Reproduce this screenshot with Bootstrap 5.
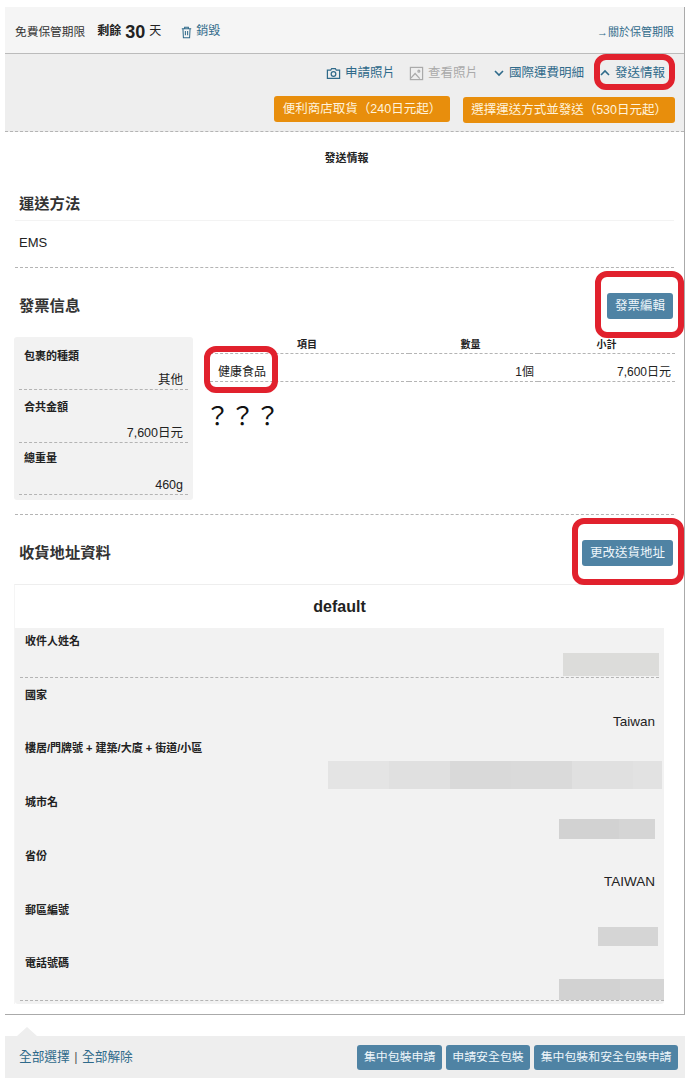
<!DOCTYPE html>
<html lang="zh-Hant">
<head>
  <meta charset="UTF-8" />
  <meta name="viewport" content="width=device-width, initial-scale=1.0" />
  <title>發送情報</title>
  <link href="https://cdn.jsdelivr.net/npm/bootstrap@5.3.3/dist/css/bootstrap.min.css" rel="stylesheet" />
  <style>
    body {
      background-color: #fff;
      color: #222;
      font-family: "Liberation Sans", "Noto Sans CJK TC", sans-serif;
      font-size: 12.5px;
      line-height: 1.3;
    }
    a { color: #2f6a8a; text-decoration: none; }
    .shot { position: relative; width: 690px; height: 1083px; padding: 7px 0 0 5px; }
    .frame { width: 680px; height: 1008px; border-right: 1px solid #aaa; border-bottom: 1px solid #aaa; }

    .keep-bar { height: 47px; background: #f5f5f5; border-bottom: 1px solid #bbb; padding: 4px 10px 0; font-size: 12px; }
    .keep-left { color: #333; font-size: 11.7px; }
    .keep-num { font-size: 18px; font-weight: 700; line-height: 1; }
    .keep-about { font-size: 11px; }
    .keep-trash { margin-left: 18px; gap: 2px; }
    .tool-bar { height: 78px; background: #eee; border-bottom: 1px dashed #b4b4b4; padding: 10px 9px 0 0; }
    .tool-link { display: flex; align-items: center; gap: 4px; height: 18px; }
    .tool-off { color: #aaa; margin-left: -2px; }
    .tool-links { gap: 16px; padding-right: 10px; }
    .chev-link { gap: 5px; }
    .btn-orange { background: #e88e0c; color: #fff3dc; border: 0; font-size: 12.5px; height: 26px; padding: 0 8px; border-radius: 3px; line-height: 26px; }
    .btn-wide { padding: 0 9px; }
    .btn-lower { margin-top: 1px; }
    .tool-btns { gap: 13px; margin-top: 14px; }
    .svg-ic { width: 15px; height: 15px; fill: none; stroke: currentColor; stroke-width: 1.3; flex: none; }
    .trash-ic { stroke-width: 1.1; }
    .chev { width: 10px; height: 10px; stroke-width: 1.6; }

    .info-title { font-size: 11px; font-weight: 700; text-align: center; height: 53px; line-height: 53px; margin: 0; padding-left: 4px; }
    .content { padding: 0 10px; }
    .sec-h { font-size: 15.3px; font-weight: 700; margin: 0; color: #333; }
    .ship-h { height: 36px; padding: 10px 4px 0; border-bottom: 1px solid #f3f3f3; }
    .ship-val { height: 47px; padding: 14px 4px 0; border-bottom: 1px dashed #b4b4b4; font-size: 13px; }
    .invoice-h { height: 69px; padding: 7px 1px 0 4px; }
    .btn-steel { background: #4f83a4; color: #eef6fb; border: 0; font-size: 12.5px; height: 26px; padding: 0 8px; border-radius: 3px; line-height: 26px; }
    .invoice-body { height: 178px; border-bottom: 1px dashed #b4b4b4; }
    .sum-box { width: 179px; height: 163px; margin-left: -1px; background: #f2f2f2; border-radius: 3px; padding: 0 5px; flex: none; }
    .sum-row { height: 52.5px; border-bottom: 1px dashed #b4b4b4; padding: 10px 5px 0 5px; }
    .sum-row .f-val { margin-top: 11px; }
    .sum-row:first-child { height: 53px; padding-top: 12px; }
    .sum-row:first-child .f-val { margin-top: 9px; }
    .sum-row:last-child { padding-top: 8px; }
    .sum-row:last-child .f-val { margin-top: 12px; }
    .f-label { font-size: 11px; font-weight: 700; line-height: 14px; }
    .f-val { text-align: right; line-height: 16px; }
    .item-wrap { width: 470px; margin-left: 12px; }
    .item-table { width: 100%; table-layout: fixed; border-collapse: collapse; }
    .item-table th { font-size: 10px; font-weight: 700; text-align: center; height: 15px; line-height: 16px; border-bottom: 1px dashed #b4b4b4; padding: 0; }
    .item-table th:nth-child(2) { padding-right: 6px; }
    .item-table td { font-size: 12px; height: 27px; border-bottom: 1px dashed #b4b4b4; padding: 11px 4px 0 13px; text-align: right; }
    .item-table td:first-child { text-align: left; }
    .ask { font-family: "Noto Sans CJK TC", sans-serif; font-size: 25px; line-height: 34px; margin-top: 15px; font-weight: 400; color: #111; }

    .addr-h { height: 69px; padding: 7px 1px 0 4px; }
    .addr-card { width: 650px; margin-left: -1px; border-top: 1px solid #eee; border-left: 1px solid #f5f5f5; }
    .addr-name { height: 43px; line-height: 43px; font-size: 16px; font-weight: 700; text-align: center; margin: 0; }
    .addr-rows { height: 376px; background: #f2f2f2; padding: 0 0 0 5px; border-radius: 0 0 3px 3px; }
    .addr-row { padding: 6px 0 0 5px; }
    .r-name { height: 50px; margin-right: 5px; border-bottom: 1px dashed #b4b4b4; }
    .r-country { height: 57px; padding-top: 10px; }
    .r-street { height: 54px; }
    .r-city { height: 53.5px; }
    .r-state { height: 54.5px; }
    .r-zip { height: 53px; }
    .r-tel { height: 51px; border-bottom: 1px dashed #b4b4b4; }
    .addr-val { height: 29px; display: flex; justify-content: flex-end; align-items: center; padding-right: 9px; margin-top: 5px; font-size: 13.5px; }
    .cells { display: flex; }
    .cells span { display: block; }
    .blot-name { width: 96px; height: 23px; margin-top: 5px; background: #dcdcda; }
    .blot-street { height: 28px; margin: 6px 2px 0 0; }
    .blot-city { height: 20px; margin: 10px 9px 0 0; }
    .blot-zip { width: 60px; height: 19px; margin: 10px 6px 0 0; background: #d5d5d5; }
    .blot-tel { height: 21px; margin-top: 9px; }
    .w-a { width: 61px; } .w-b { width: 60px; } .w-c { width: 36px; } .w-d { width: 44px; } .w-e { width: 29px; }
    .g1 { background: #e4e4e4; } .g2 { background: #e0e0e0; } .g3 { background: #d9d9d9; } .g4 { background: #dadada; } .g5 { background: #e2e2e2; }
    .g6 { background: #d2d2d2; } .g7 { background: #d5d5d5; }

    .notch { width: 0; height: 0; border-left: 10px solid transparent; border-right: 10px solid transparent; border-bottom: 9px solid #eee; margin: 12px 0 0 12px; }
    .foot-bar { width: 680px; height: 42px; background: #eee; padding: 0 7px 0 14px; }
    .foot-links { font-size: 12.7px; }
    .foot-sep { color: #555; margin: 0 4.5px; }
    .foot-btns { gap: 4px; }
    .foot-btns .btn-steel { height: 25px; line-height: 25px; padding: 0 6.5px; font-size: 11.9px; }

    .red-mark { position: absolute; border: 6px solid #e1212d; border-radius: 12px; pointer-events: none; }
    .mark-info { left: 594px; top: 54px; width: 81px; height: 36px; }
    .mark-inv { left: 595px; top: 271px; width: 89px; height: 67px; }
    .mark-food { left: 204px; top: 346px; width: 74px; height: 47px; }
    .mark-addr { left: 572px; top: 518px; width: 112px; height: 67px; }
  </style>
</head>
<body class="m-0">
  <div class="shot">
    <div class="frame">
      <div class="keep-bar d-flex align-items-center">
        <span class="keep-left me-2">免費保管期限</span>
        <span class="ms-1 fw-bold">剩餘</span>
        <span class="keep-num ms-1">30</span>
        <span class="ms-1">天</span>
        <a href="#" class="keep-trash d-flex align-items-center">
          <svg class="svg-ic trash-ic" viewBox="0 0 16 16"><path d="M3 4h10M6 4V2.5h4V4M4.2 4l.5 9.5h6.6l.5-9.5M6.8 6.5v4.5M9.2 6.5v4.5"/></svg>
          <span>銷毀</span>
        </a>
        <a href="#" class="keep-about ms-auto">→關於保管期限</a>
      </div>

      <div class="tool-bar">
        <div class="tool-links d-flex justify-content-end">
          <a href="#" class="tool-link">
            <svg class="svg-ic" viewBox="0 0 16 16"><path d="M1.5 4.500h3.500l1-1.700h4l1 1.700h3.500v8.700h-13z"/><circle cx="8" cy="8.600" r="2.500"/></svg>
            <span>申請照片</span>
          </a>
          <span class="tool-link tool-off">
            <svg class="svg-ic" viewBox="0 0 16 16"><rect x="1.500" y="1.500" width="13" height="13"/><path d="M2 13l4.500-5 5 5.500"/><circle cx="10.500" cy="5.500" r="1"/></svg>
            <span>查看照片</span>
          </span>
          <a href="#" class="tool-link chev-link">
            <svg class="svg-ic chev" viewBox="0 0 10 10"><path d="M1 3l4 4 4-4"/></svg>
            <span>國際運費明細</span>
          </a>
          <a href="#" class="tool-link chev-link">
            <svg class="svg-ic chev" viewBox="0 0 10 10"><path d="M1 7l4-4 4 4"/></svg>
            <span>發送情報</span>
          </a>
        </div>
        <div class="tool-btns d-flex justify-content-end align-items-start">
          <button class="btn-orange btn-wide">便利商店取貨（240日元起）</button>
          <button class="btn-orange btn-lower">選擇運送方式並發送（530日元起）</button>
        </div>
      </div>

      <p class="info-title">發送情報</p>

      <div class="content">
        <div class="ship-h"><h2 class="sec-h">運送方法</h2></div>
        <div class="ship-val">EMS</div>

        <div class="invoice-h d-flex align-items-center justify-content-between">
          <h2 class="sec-h">發票信息</h2>
          <button class="btn-steel">發票編輯</button>
        </div>
        <div class="invoice-body d-flex">
          <div class="sum-box">
            <div class="sum-row"><div class="f-label">包裹的種類</div><div class="f-val">其他</div></div>
            <div class="sum-row"><div class="f-label">合共金額</div><div class="f-val">7,600日元</div></div>
            <div class="sum-row"><div class="f-label">總重量</div><div class="f-val">460g</div></div>
          </div>
          <div class="item-wrap">
            <table class="item-table">
              <colgroup><col style="width:204px"><col style="width:129px"><col style="width:137px"></colgroup>
              <tr><th>項目</th><th>數量</th><th>小計</th></tr>
              <tr><td>健康食品</td><td>1個</td><td>7,600日元</td></tr>
            </table>
            <div class="ask">？？？</div>
          </div>
        </div>

        <div class="addr-h d-flex align-items-center justify-content-between">
          <h2 class="sec-h">收貨地址資料</h2>
          <button class="btn-steel">更改送貨地址</button>
        </div>
        <div class="addr-card">
          <h3 class="addr-name">default</h3>
          <div class="addr-rows">
            <div class="addr-row r-name">
              <div class="f-label">收件人姓名</div>
              <div class="d-flex justify-content-end"><div class="blot-name"></div></div>
            </div>
            <div class="addr-row r-country">
              <div class="f-label">國家</div>
              <div class="addr-val">Taiwan</div>
            </div>
            <div class="addr-row r-street">
              <div class="f-label">樓居/門牌號 + 建築/大廈 + 街道/小區</div>
              <div class="d-flex justify-content-end">
                <div class="cells blot-street"><span class="w-a g1"></span><span class="w-a g2"></span><span class="w-a g3"></span><span class="w-a g4"></span><span class="w-a g2"></span><span class="w-e g5"></span></div>
              </div>
            </div>
            <div class="addr-row r-city">
              <div class="f-label">城市名</div>
              <div class="d-flex justify-content-end">
                <div class="cells blot-city"><span class="w-b g6"></span><span class="w-c g7"></span></div>
              </div>
            </div>
            <div class="addr-row r-state">
              <div class="f-label">省份</div>
              <div class="addr-val">TAIWAN</div>
            </div>
            <div class="addr-row r-zip">
              <div class="f-label">郵區編號</div>
              <div class="d-flex justify-content-end"><div class="blot-zip"></div></div>
            </div>
            <div class="addr-row r-tel">
              <div class="f-label">電話號碼</div>
              <div class="d-flex justify-content-end">
                <div class="cells blot-tel"><span class="w-a g6"></span><span class="w-d g7"></span></div>
              </div>
            </div>
          </div>
        </div>
      </div>
    </div>

    <div class="notch"></div>
    <div class="foot-bar d-flex align-items-center justify-content-between">
      <div class="foot-links">
        <a href="#">全部選擇</a><span class="foot-sep">|</span><a href="#">全部解除</a>
      </div>
      <div class="foot-btns d-flex">
        <button class="btn-steel">集中包裝申請</button>
        <button class="btn-steel">申請安全包裝</button>
        <button class="btn-steel">集中包裝和安全包裝申請</button>
      </div>
    </div>

    <div class="red-mark mark-info"></div>
    <div class="red-mark mark-inv"></div>
    <div class="red-mark mark-food"></div>
    <div class="red-mark mark-addr"></div>
  </div>

  <script src="https://cdn.jsdelivr.net/npm/bootstrap@5.3.3/dist/js/bootstrap.bundle.min.js"></script>
</body>
</html>
